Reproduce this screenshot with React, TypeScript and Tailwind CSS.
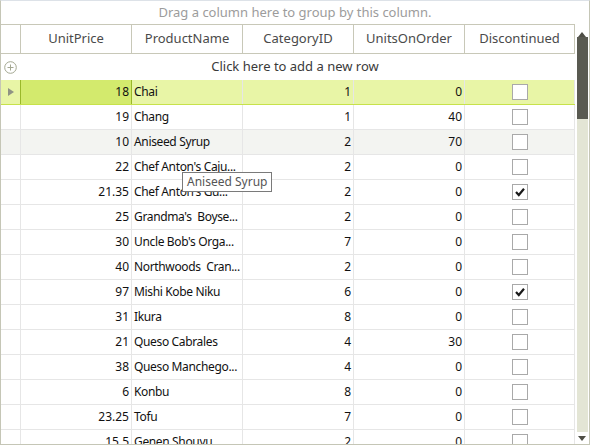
import React from "react";

type Row = { price: string; name: string; cat: string; units: string; disc: boolean };

const rows: Row[] = [
  { price: "18", name: "Chai", cat: "1", units: "0", disc: false },
  { price: "19", name: "Chang", cat: "1", units: "40", disc: false },
  { price: "10", name: "Aniseed Syrup", cat: "2", units: "70", disc: false },
  { price: "22", name: "Chef Anton's Caju...", cat: "2", units: "0", disc: false },
  { price: "21.35", name: "Chef Anton's Gu...", cat: "2", units: "0", disc: true },
  { price: "25", name: "Grandma's  Boyse...", cat: "2", units: "0", disc: false },
  { price: "30", name: "Uncle Bob's Orga...", cat: "7", units: "0", disc: false },
  { price: "40", name: "Northwoods  Cran...", cat: "2", units: "0", disc: false },
  { price: "97", name: "Mishi Kobe Niku", cat: "6", units: "0", disc: true },
  { price: "31", name: "Ikura", cat: "8", units: "0", disc: false },
  { price: "21", name: "Queso Cabrales", cat: "4", units: "30", disc: false },
  { price: "38", name: "Queso Manchego...", cat: "4", units: "0", disc: false },
  { price: "6", name: "Konbu", cat: "8", units: "0", disc: false },
  { price: "23.25", name: "Tofu", cat: "7", units: "0", disc: false },
  { price: "15.5", name: "Genen Shouyu", cat: "2", units: "0", disc: false },
];

const headers = ["UnitPrice", "ProductName", "CategoryID", "UnitsOnOrder", "Discontinued"];

function Check({ on }: { on: boolean }) {
  return (
    <div className="w-4 h-4 border border-[#a9a9a9] bg-white flex items-center justify-center">
      {on && (
        <svg width="14" height="14" viewBox="0 0 14 14">
          <path d="M3 7 L5.8 10 L11 3.8" fill="none" stroke="#1a1a1a" strokeWidth="2.2" />
        </svg>
      )}
    </div>
  );
}

export default function App() {
  return (
    <div
      className="w-[590px] h-[445px] bg-white border border-[#c5c6b6] border-t-[#dde2e8] overflow-hidden relative text-[12px] text-[#111]"
      style={{ fontFamily: '"Noto Sans", "Open Sans", sans-serif' }}
    >
      {/* group panel */}
      <div className="h-[23px] flex items-center justify-center text-[13px] text-[#9c9c9c]">
        Drag a column here to group by this column.
      </div>
      <div className="flex h-[421px]">
        <div className="w-[574px] flex flex-col">
          {/* header */}
          <div className="flex h-[30px] border-t border-b border-[#c8c8b8] shrink-0">
            <div className="w-[20px] border-r border-[#c8c8b8]" />
            {headers.map((h, i) => (
              <div
                key={h}
                className={`${i === 4 ? "w-[110px] border-r" : "w-[111px] border-r"} border-[#c8c8b8] flex items-center justify-center text-[13px] text-[#4a4a4a]`}
              >
                {h}
              </div>
            ))}
          </div>
          {/* new row */}
          <div className="h-[26px] flex items-center relative shrink-0">
            <div className="absolute left-[3px] top-[7px]">
              <svg width="13" height="13" viewBox="0 0 13 13">
                <circle cx="6.5" cy="6.5" r="5.8" fill="none" stroke="#a3a791" strokeWidth="1" />
                <path d="M6.5 3.5 V9.5 M3.5 6.5 H9.5" stroke="#a3a791" strokeWidth="1" />
              </svg>
            </div>
            <div className="w-full text-center pl-[14px] text-[13px] text-[#3a3a3a]">Click here to add a new row</div>
          </div>
          {/* data rows */}
          {rows.map((r, idx) => {
            const sel = idx === 0;
            const hov = idx === 2;
            const bg = sel ? "bg-[#e8f5a6]" : hov ? "bg-[#f3f4f1]" : "bg-white";
            const bb = sel ? "border-[#c7e24a]" : "border-[#e6e6e6]";
            return (
              <div key={idx} className={`flex h-[25px] shrink-0 border-b ${bb} ${bg}`}>
                <div className="w-[20px] border-r border-[#e6e6e6] flex items-center justify-center">
                  {sel && (
                    <svg width="8" height="10" viewBox="0 0 8 10">
                      <path d="M1 1 L7 5 L1 9 Z" fill="#8f9384" />
                    </svg>
                  )}
                </div>
                <div
                  className={`w-[111px] flex items-center justify-end pr-[2px] ${
                    sel ? "bg-[#d3ea6d] border-l border-r border-[#9ab82a] -ml-px w-[112px]" : "border-r border-[#e6e6e6]"
                  }`}
                >
                  {r.price}
                </div>
                <div className="w-[111px] border-r border-[#e6e6e6] flex items-center pl-[2px] whitespace-pre overflow-hidden tracking-[-0.35px]">
                  {r.name}
                </div>
                <div className="w-[111px] border-r border-[#e6e6e6] flex items-center justify-end pr-[2px]">
                  {r.cat}
                </div>
                <div className="w-[111px] border-r border-[#e6e6e6] flex items-center justify-end pr-[2px]">
                  {r.units}
                </div>
                <div className="w-[110px] border-r border-[#e6e6e6] flex items-center justify-center">
                  <Check on={r.disc} />
                </div>
              </div>
            );
          })}
        </div>
        {/* scrollbar */}
        <div className="w-[14px] flex flex-col items-center border-t border-transparent">
          <div className="h-[12px] flex items-end justify-center">
            <svg width="8" height="5" viewBox="0 0 8 5">
              <path d="M0 5 L4 0 L8 5 Z" fill="#4e4e46" />
            </svg>
          </div>
          <div className="w-[11px] h-[82px] bg-[#595a51]" />
          <div className="w-[11px] h-[313px] bg-[#e3e5d5]" />
          <div className="h-[12px] flex items-center justify-center">
            <svg width="8" height="5" viewBox="0 0 8 5">
              <path d="M0 0 L8 0 L4 5 Z" fill="#4e4e46" />
            </svg>
          </div>
        </div>
      </div>
      {/* tooltip */}
      <div className="absolute left-[181px] top-[171px] h-[20px] px-[4px] flex items-center border border-[#7a7a7a] bg-white text-[12px] text-[#555]">
        Aniseed Syrup
      </div>
    </div>
  );
}
